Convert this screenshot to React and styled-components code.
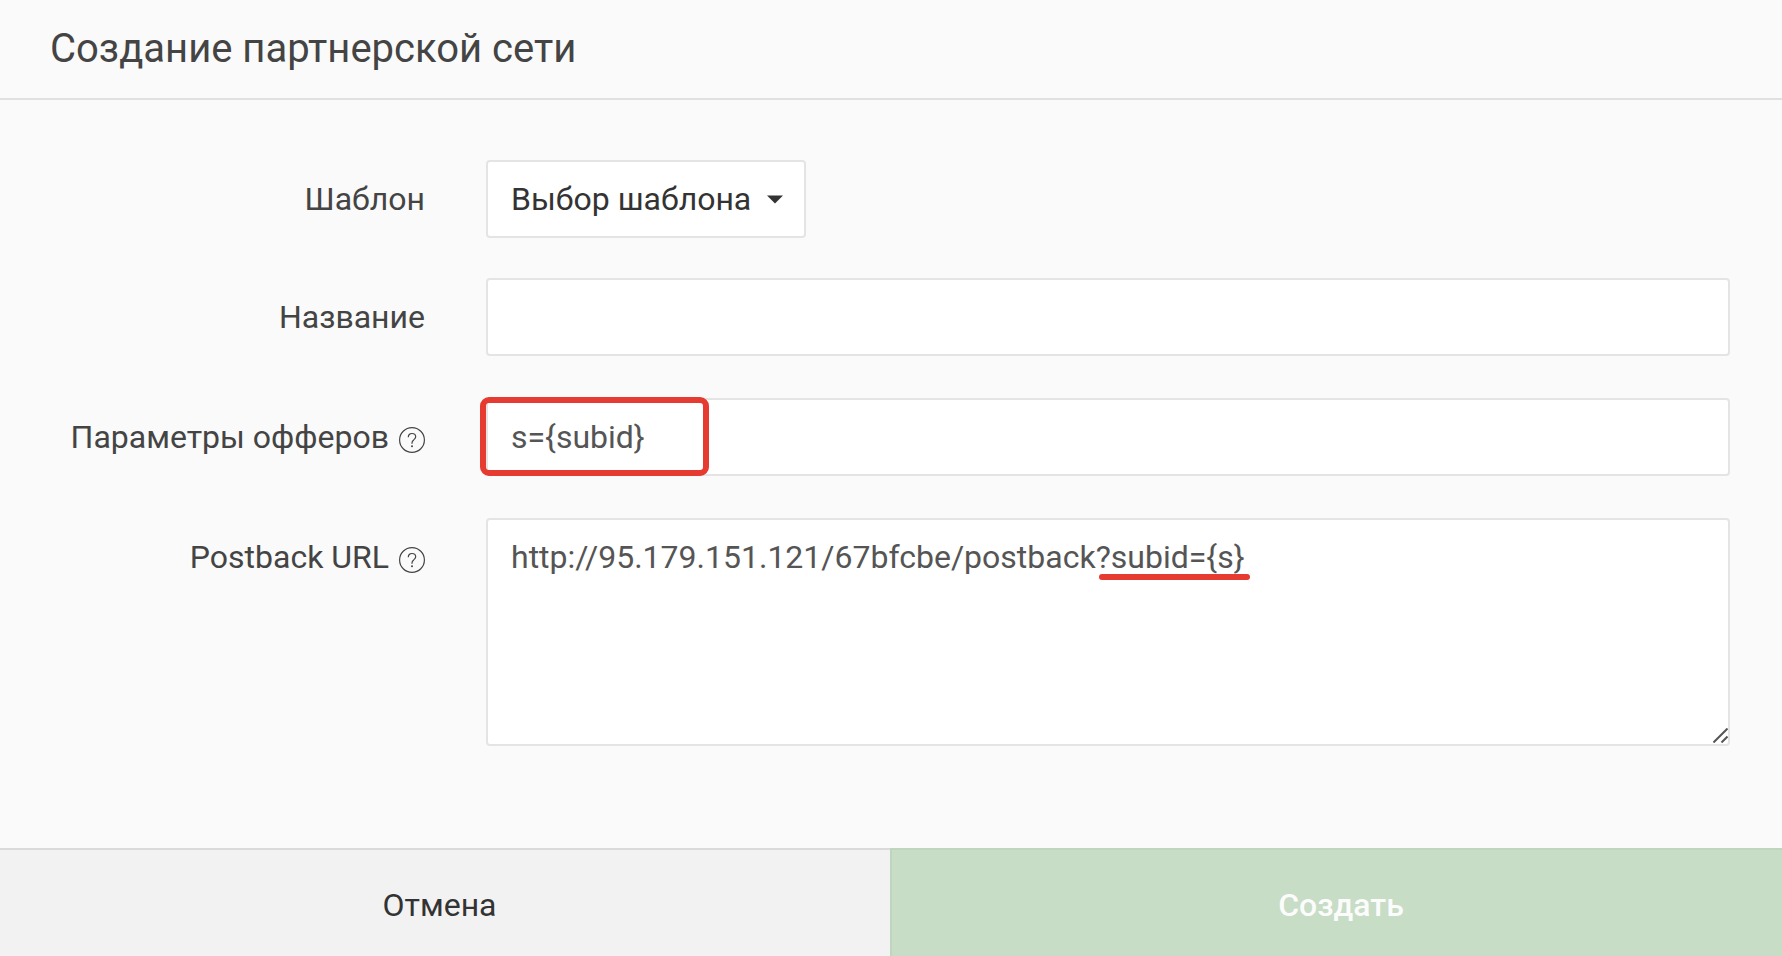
import React, { Component } from 'react';
import styled, { createGlobalStyle, css } from 'styled-components';

const GlobalStyle = createGlobalStyle`
  * {
    box-sizing: border-box;
  }

  html, body, #root {
    height: 100%;
  }

  body {
    margin: 0;
    background: #fafafa;
    color: #444;
    font-family: Roboto, sans-serif;
    font-size: 32px;
    line-height: 40px;
  }
`;

const Modal = styled.form`
  display: flex;
  flex-direction: column;
  min-height: 100%;
`;

const Header = styled.header`
  padding: 25px 50px;
  border-bottom: 2px solid #e0e0e0;
`;

const Title = styled.h1`
  margin: 0;
  font-size: 40px;
  font-weight: 400;
  line-height: 48px;
`;

const Body = styled.div`
  flex: 1;
  padding: 60px 52px;
`;

const Row = styled.div`
  display: grid;
  grid-template-columns: 373px 1fr;
  column-gap: 61px;
  margin-bottom: ${props => (props.$tight ? '40px' : '42px')};
`;

const LabelCell = styled.div`
  display: flex;
  justify-content: flex-end;
  align-items: center;
  gap: 10px;
  height: 78px;
`;

const Control = styled.div`
  position: relative;
  display: flex;
  justify-self: ${props => (props.$inline ? 'start' : 'stretch')};
`;

const field = css`
  width: 100%;
  margin: 0;
  padding: 17px 23px;
  border: 2px solid #e4e4e4;
  border-radius: 4px;
  outline: none;
  background: #fff;
  color: #555;
  font: inherit;
`;

const Input = styled.input`
  ${field}
  height: 78px;
`;

const TextArea = styled.textarea`
  ${field}
  height: 228px;
  resize: vertical;

  &::-webkit-resizer {
    display: none;
  }
`;

const Select = styled.select`
  ${field}
  height: 78px;
  padding-right: 52px;
  appearance: none;
  color: #333;
`;

const Caret = styled.svg`
  position: absolute;
  top: 35px;
  right: 23px;
  width: 16px;
  height: 9px;
  fill: #333;
  pointer-events: none;
`;

const Grip = styled.svg`
  position: absolute;
  right: 2px;
  bottom: 3px;
  width: 15px;
  height: 15px;
  stroke: #555;
  stroke-width: 2;
  pointer-events: none;
`;

const Help = styled.svg`
  width: 26px;
  height: 26px;
  margin-top: 5px;
  fill: none;
  stroke: #444;
`;

// red marks over the values that have to correspond
const Frame = styled.span`
  position: absolute;
  top: -1px;
  left: -6px;
  width: 229px;
  height: 79px;
  border: 6px solid #e53b30;
  border-radius: 9px;
  pointer-events: none;
`;

const Underline = styled.span`
  position: absolute;
  top: 56px;
  left: 613px;
  width: 151px;
  height: 6px;
  border-radius: 3px;
  background: #e53b30;
  pointer-events: none;
`;

const Footer = styled.footer`
  display: grid;
  grid-template-columns: 1fr 1fr;
`;

const Button = styled.button`
  height: 108px;
  margin: 0;
  padding: 4px 12px 0 0;
  border: 0 solid #dadada;
  border-top-width: 2px;
  background: #f2f2f2;
  color: #333;
  font: inherit;
`;

const SubmitButton = styled(Button)`
  margin-left: -1px;
  padding: 4px 0 0 8px;
  border-color: #c0d5c0;
  border-left-width: 2px;
  background: #c7ddc6;
  color: #fbfcfb;
  font-weight: 500;
`;

const HelpIcon = () => (
  <Help viewBox="0 0 26 26" aria-hidden="true">
    <circle cx="13" cy="13" r="12.4" strokeWidth="1.2" />
    <path d="M9.3 10.2C9.3 7.8 10.8 6.5 13 6.5c2.2 0 3.7 1.3 3.7 3.2 0 1.5-.9 2.3-2 3.2-1.3.9-1.7 1.5-1.7 3v.8" strokeWidth="1.2" />
    <circle cx="13" cy="19.2" r="1" fill="#444" stroke="none" />
  </Help>
);

class App extends Component {
  constructor(props) {
    super(props);

    this.state = {
      template: '',
      name: '',
      params: 's={subid}',
      postback: 'http://95.179.151.121/67bfcbe/postback?subid={s}',
    };
    this.handleChange = this.handleChange.bind(this);
    this.handleSubmit = this.handleSubmit.bind(this);
  }

  handleChange(e) {
    this.setState({ [e.target.name]: e.target.value });
  }

  handleSubmit(e) {
    e.preventDefault();
  }

  render() {
    return (
      <>
        <GlobalStyle />
        <Modal onSubmit={this.handleSubmit}>
          <Header>
            <Title>Создание партнерской сети</Title>
          </Header>

          <Body>
            <Row $tight>
              <LabelCell>
                <label htmlFor="template">Шаблон</label>
              </LabelCell>
              <Control $inline>
                <Select id="template" name="template" value={this.state.template} onChange={this.handleChange}>
                  <option value="">Выбор шаблона</option>
                </Select>
                <Caret viewBox="0 0 16 9" aria-hidden="true">
                  <path d="M0 .5h16L8 8.5z" />
                </Caret>
              </Control>
            </Row>

            <Row>
              <LabelCell>
                <label htmlFor="name">Название</label>
              </LabelCell>
              <Control>
                <Input id="name" name="name" type="text" value={this.state.name} onChange={this.handleChange} />
              </Control>
            </Row>

            <Row>
              <LabelCell>
                <label htmlFor="params">Параметры офферов</label>
                <HelpIcon />
              </LabelCell>
              <Control>
                <Input id="params" name="params" type="text" value={this.state.params} onChange={this.handleChange} />
                <Frame />
              </Control>
            </Row>

            <Row>
              <LabelCell>
                <label htmlFor="postback">Postback URL</label>
                <HelpIcon />
              </LabelCell>
              <Control>
                <TextArea id="postback" name="postback" spellCheck="false" value={this.state.postback} onChange={this.handleChange} />
                <Underline />
                <Grip viewBox="0 0 15 15" aria-hidden="true">
                  <path d="M.5 14.5l14-14M8.5 14.5l6-6" />
                </Grip>
              </Control>
            </Row>
          </Body>

          <Footer>
            <Button type="button">Отмена</Button>
            <SubmitButton type="submit">Создать</SubmitButton>
          </Footer>
        </Modal>
      </>
    );
  }
}

export default App;
